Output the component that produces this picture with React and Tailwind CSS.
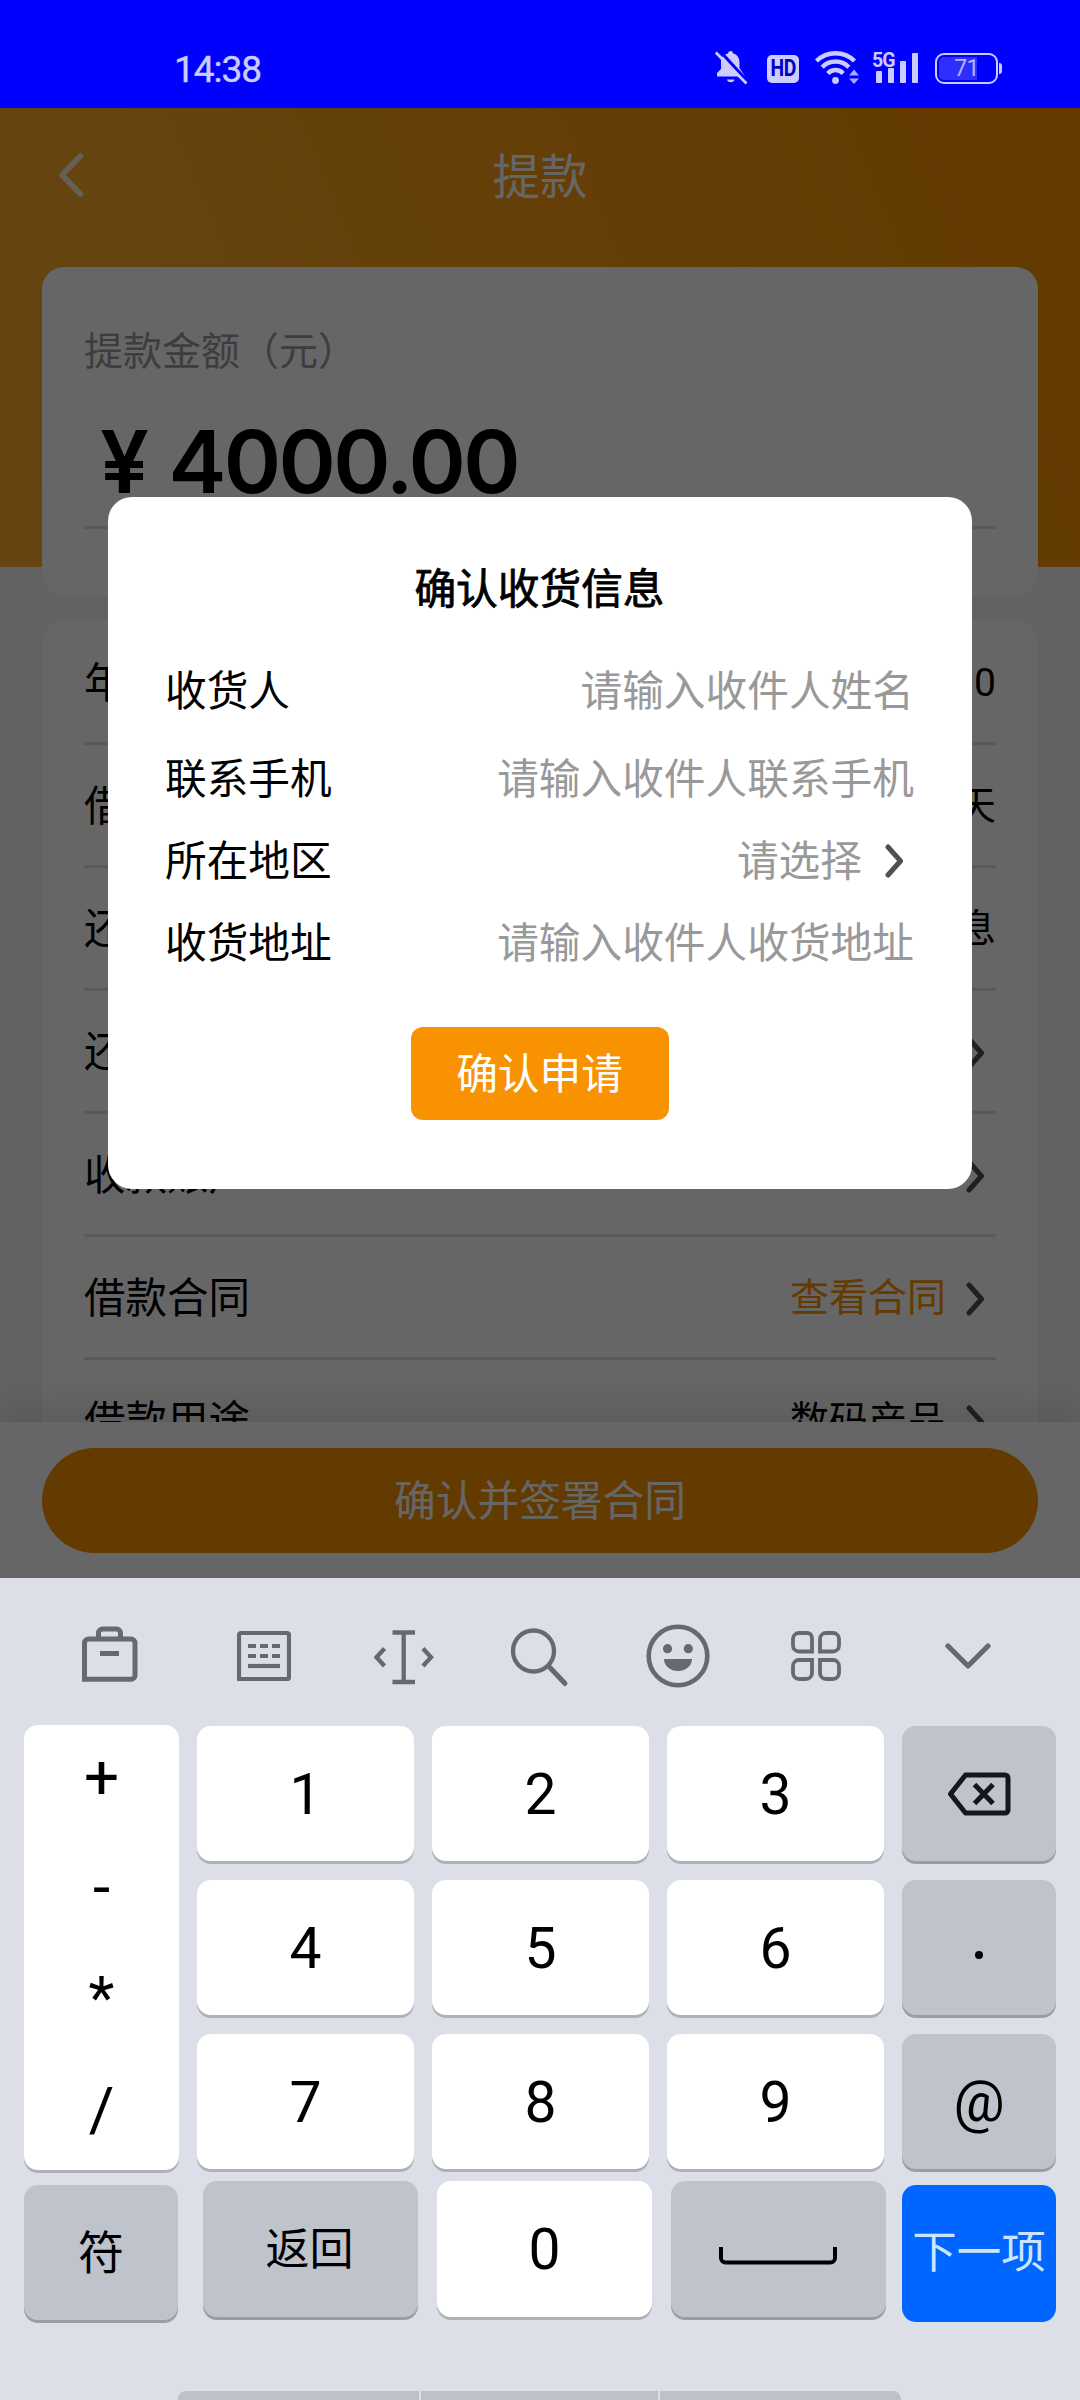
const cjk = "font-['Inter','Noto_Sans_CJK_SC',sans-serif]"

function Chevron({ className = '' }) {
  return (
    <svg className={className} width="20" height="34" viewBox="0 0 20 34" fill="none" stroke="#505050" strokeWidth="5" strokeLinecap="round" strokeLinejoin="round">
      <path d="M3 3 L15.500 17 L3 31" />
    </svg>
  )
}

function StatusBar() {
  return (
    <div className="flex h-[108px] shrink-0 items-start bg-[#0000ff] pt-[49px] text-[#ccccff]">
      <span className="ml-[174px] w-[90px] font-['Roboto',sans-serif] text-[37px] leading-[42px] tracking-[-1px] [-webkit-text-stroke:0.4px_#ccccff]">
        14:38
      </span>

      {/* Muted bell */}
      <svg className="ml-[450px]" width="34" height="36" viewBox="0 0 34 36" fill="currentColor">
        <path d="M16.5 2 a2.6 2.6 0 0 1 2.6 2.4 C24 5.6 25.5 9.5 25.5 14 V19 L31 27.5 H3 V24 L7 20 V12 C7.2 8 9.5 5.5 14 4.4 A2.6 2.6 0 0 1 16.5 2 Z" />
        <path d="M13 30.5 h7.5 a3.8 3.2 0 0 1 -7.5 0 Z" />
        <path d="M5 1 L36 35" stroke="#0000ff" strokeWidth="3" />
        <path d="M1.8 3.5 L32.5 34.5" stroke="currentColor" strokeWidth="2.8" fill="none" />
      </svg>

      <div className="mt-[6px] ml-[19px] flex h-[28px] w-[32px] items-center justify-center rounded-[5px] bg-[#ccccff] font-['Roboto',sans-serif] text-[23px] font-bold tracking-[-0.3px] text-[#0000c8]">
        <span className="scale-x-[0.84]">HD</span>
      </div>

      {/* Wi-Fi with traffic arrows */}
      <svg className="ml-[16px]" width="46" height="36" viewBox="0 0 46 36" fill="none" stroke="currentColor" strokeWidth="4.4">
        <path d="M1.5 12 A27 27 0 0 1 39.5 12" />
        <path d="M7.2 18.2 A18.5 18.5 0 0 1 33.8 18.2" />
        <path d="M12.8 24.4 A10.5 10.5 0 0 1 28.2 24.4" />
        <circle cx="20.5" cy="31.5" r="3.4" fill="currentColor" stroke="none" />
        <path d="M39 20.5 l5 6 h-10 Z M39 35 l5 -5.500 h-10 Z" fill="#a6a6ff" stroke="none" />
      </svg>

      {/* Mobile signal */}
      <div className="relative ml-[12px] h-[36px] w-[48px]">
        <span className="absolute top-[1px] left-[-1px] font-['Roboto',sans-serif] text-[21px] leading-[20px] font-bold tracking-[-1px]">
          <span className="inline-block origin-left scale-x-[0.93]">5G</span>
        </span>
        <div className="flex h-[34px] items-end gap-[6px] pl-[3px]">
          <i className="h-[12px] w-[6px] rounded-[1px] bg-[#ccccff]" />
          <i className="h-[15px] w-[6px] rounded-[1px] bg-[#ccccff]" />
          <i className="h-[22px] w-[6px] rounded-[1px] bg-[#ccccff]" />
          <i className="h-[30px] w-[6px] rounded-[1px] bg-[#ccccff]" />
        </div>
      </div>

      <div className="mt-[4px] ml-[14px] flex h-[31px] w-[63px] rounded-[9px] border-[2.5px] border-[#ccccff] p-[2px]">
        <div className="flex w-[38px] items-center justify-end rounded-l-[5px] bg-[#2e2eff]">
          <span className="-mr-[2px] font-['Roboto',sans-serif] text-[23px] leading-none tracking-[-0.5px] text-[#b4b4ff]">71</span>
        </div>
      </div>
      <i className="mt-[14px] ml-[1px] h-[11px] w-[3px] rounded-r bg-[#ccccff]" />
    </div>
  )
}

const rows = [
  { label: '年利率', value: '0' },
  { label: '借款期限', value: '天' },
  { label: '还款方式', value: '息' },
  { label: '还款计划', arrow: true },
  { label: '收款账户', arrow: true },
  { label: '借款合同', value: '查看合同', arrow: true, accent: true },
  { label: '借款用途', value: '数码产品', arrow: true },
]

function LoanPage() {
  return (
    <>
      <div className="h-[1314px] overflow-hidden bg-[#f5f5f5]">
        <div className="h-[459px] bg-[linear-gradient(68deg,#ffac2d_0%,#fda926_28%,#f99e14_48%,#f99a0c_70%,#f89200_100%)]">
          <header className="flex h-[135px] items-center px-[57px] text-white">
            <svg className="-mt-[2px]" width="28" height="48" viewBox="0 0 28 48" fill="none" stroke="#fff" strokeOpacity="0.8" strokeWidth="5.500" strokeLinecap="round" strokeLinejoin="round">
              <path d="M23.500 5 L5 24 L23.500 43" />
            </svg>
            <h1 className="flex-1 pt-[2px] pr-[28px] text-center text-[47.500px]">提款</h1>
          </header>

          <section className="mx-[42px] mt-[24px] h-[328px] rounded-[22px] bg-white px-[42px] pt-[54px]">
            <p className="text-[39px] leading-[60px] text-[#999]">提款金额（元）</p>
            <div className="mt-[24px] flex h-[124px] items-start border-b-[3px] border-[#e0e0e0] pt-[13px] pl-[16px] text-[87px] leading-none font-semibold tracking-[-2.600px]">
              <span className="mr-[22px]">¥</span>
              <span>4000.00</span>
            </div>
          </section>

          <section className="mx-[42px] mt-[26px] h-[900px] rounded-[22px] bg-white px-[42px] pt-px">
            {rows.map((row) => (
              <div key={row.label} className="flex h-[123px] items-center border-b-[3px] border-[#dedede] pt-[3px] text-[41.500px] text-black">
                <span>{row.label}</span>
                <span className={`ml-auto font-['Roboto','Noto_Sans_CJK_SC',sans-serif] text-[39px] ${row.accent ? 'text-[#f89200]' : ''}`}>
                  {row.value}
                </span>
                {row.arrow && <Chevron className="mr-[10px] ml-[20px]" />}
              </div>
            ))}
          </section>
        </div>
      </div>

      <div className="relative h-[156px] bg-white px-[42px] pt-[26px] shadow-[0_-6px_46px_rgba(0,0,0,0.15)]">
        <button className="h-[105px] w-full rounded-full bg-[#f89200] pt-[2px] text-[41.700px] text-white">确认并签署合同</button>
      </div>
    </>
  )
}

function Field({ label, placeholder, arrow, className }) {
  return (
    <div className={`flex items-center justify-between text-[41.700px] ${className}`}>
      <span className="text-black">{label}</span>
      <span className="flex items-center text-[#999]">
        {placeholder}
        {arrow && <Chevron className="mr-[9px] ml-[23px]" />}
      </span>
    </div>
  )
}

function ConfirmDialog() {
  return (
    <div className="h-[692px] w-[864px] rounded-[24px] bg-white pt-[60px] pr-[58px] pl-[57px]">
      <h2 className="text-center text-[41.700px] leading-[64px] text-black [-webkit-text-stroke:0.8px_#000]">确认收货信息</h2>
      <Field className="mt-[26px] h-[88px]" label="收货人" placeholder="请输入收件人姓名" />
      <Field className="h-[88px]" label="联系手机" placeholder="请输入收件人联系手机" />
      <Field className="h-[76px]" label="所在地区" placeholder="请选择" arrow />
      <Field className="h-[88px]" label="收货地址" placeholder="请输入收件人收货地址" />
      <button className="mx-auto mt-[40px] block h-[93px] w-[258px] rounded-[12px] bg-[#f89200] pt-px text-[41.700px] text-white">
        确认申请
      </button>
    </div>
  )
}

function KeyboardToolbar() {
  return (
    <div className="flex h-[147px] items-start pt-[46px] pl-[82px] text-[#676871]">
      <svg width="56" height="64" viewBox="0 0 56 64" fill="none" stroke="currentColor" strokeWidth="5">
        <path d="M2.500 55.200 V19 a4 4 0 0 1 4 -4 H49 a4 4 0 0 1 4 4 V51.200 a4 4 0 0 1 -4 4 Z" />
        <path d="M16.500 15 V9 a4 4 0 0 1 4 -4 h14 a4 4 0 0 1 4 4 V15" />
        <path d="M18 29.500 h19" />
      </svg>
      <svg className="ml-[99px]" width="54" height="64" viewBox="0 0 54 64" fill="none" stroke="currentColor" strokeWidth="4.200">
        <path d="M2 55 V11 a2 2 0 0 1 2 -2 H50 a2 2 0 0 1 2 2 V53 a2 2 0 0 1 -2 2 Z" />
        <path d="M11 22 h32 M11 32 h32" strokeDasharray="8 4" />
        <path d="M11 42 h32" />
      </svg>
      <svg className="ml-[83px]" width="60" height="64" viewBox="0 0 60 64" fill="none" stroke="currentColor" strokeWidth="4.300">
        <path d="M18.500 8.500 h22.500 M18.500 58 h22.500 M29.700 8.500 V58" />
        <path d="M10.500 24.500 L2.500 33.300 L10.500 42 M49 24.500 L57 33.300 L49 42" />
      </svg>
      <svg className="ml-[77px]" width="58" height="64" viewBox="0 0 58 64" fill="none" stroke="currentColor" strokeWidth="4.300">
        <circle cx="22.500" cy="27" r="20.500" />
        <path d="M37.500 42 L54 59.500" strokeWidth="5" strokeLinecap="round" />
      </svg>
      <svg className="ml-[77px]" width="64" height="64" viewBox="0 0 64 64" fill="currentColor">
        <circle cx="32" cy="32" r="29.300" fill="none" stroke="currentColor" strokeWidth="4.600" />
        <circle cx="21.500" cy="24.700" r="4.600" />
        <circle cx="42.300" cy="24.700" r="4.600" />
        <path d="M18 35 H46 a14 12 0 0 1 -28 0 Z" />
      </svg>
      <svg className="ml-[81px]" width="50" height="64" viewBox="0 0 50 64" fill="none" stroke="currentColor" strokeWidth="3.800">
        <path d="M8 9 h8 a5 5 0 0 1 5 5 V27.500 H8 a6 6 0 0 1 -6 -6 V15 a6 6 0 0 1 6 -6 Z" />
        <path d="M35 9 h7 a6 6 0 0 1 6 6 V21.500 a6 6 0 0 1 -6 6 H29 V15 a6 6 0 0 1 6 -6 Z" />
        <path d="M8 36 H21 V49 a6 6 0 0 1 -6 6 H8 a6 6 0 0 1 -6 -6 V42 a6 6 0 0 1 6 -6 Z" />
        <path d="M29 36 H42 a6 6 0 0 1 6 6 V49 a6 6 0 0 1 -6 6 H35 a6 6 0 0 1 -6 -6 Z" />
      </svg>
      <svg className="ml-[104px]" width="46" height="64" viewBox="0 0 46 64" fill="none" stroke="currentColor" strokeWidth="5.200" strokeLinecap="round" strokeLinejoin="round">
        <path d="M3 22 L23 42 L43 22" />
      </svg>
    </div>
  )
}

const tones = {
  light: 'bg-white shadow-[0_3px_0_#afb1b9]',
  dark: 'bg-[#bfc3cc] shadow-[0_3px_0_#9a9da7]',
}

function Key({ tone = 'light', className = 'w-[217px]', children }) {
  return (
    <div className={`flex h-[135px] shrink-0 items-center justify-center rounded-[14px] pt-px text-black ${tones[tone]} ${className}`}>
      {children}
    </div>
  )
}

function Keyboard() {
  return (
    <div className="h-[822px] overflow-hidden bg-[#dddfe8] font-['Roboto','Noto_Sans_CJK_SC',sans-serif] text-[57px] leading-none">
      <KeyboardToolbar />

      <div className="flex gap-[18px] pl-[24px]">
        <div className="flex h-[445px] w-[155px] flex-col items-center rounded-[14px] bg-white pt-[21px] text-[62px] leading-none text-black shadow-[0_3px_0_#afb1b9]">
          <span className="h-[110px]">+</span>
          <span className="h-[112px]">-</span>
          <span className="h-[111px] text-[60px]">*</span>
          <span>/</span>
        </div>
        <div className="mt-px grid grid-cols-[217px_217px_217px_154px] gap-[18px]">
          <Key>1</Key>
          <Key>2</Key>
          <Key>3</Key>
          <Key tone="dark" className="w-[154px]">
            <svg width="64" height="44" viewBox="0 0 64 44" fill="none" stroke="#14171c" strokeWidth="5" strokeLinejoin="round">
              <path d="M18.500 3 H58 a3 3 0 0 1 3 3 V38 a3 3 0 0 1 -3 3 H18.500 L3.500 22 Z" />
              <path d="M27.500 12.500 L46 31.500 M46 12.500 L27.500 31.500" />
            </svg>
          </Key>
          <Key>4</Key>
          <Key>5</Key>
          <Key>6</Key>
          <Key tone="dark" className="w-[154px]">
            <i className="mt-[13px] h-[8px] w-[8px] rounded-full bg-black" />
          </Key>
          <Key>7</Key>
          <Key>8</Key>
          <Key>9</Key>
          <Key tone="dark" className="w-[154px] pb-[2px]">@</Key>
        </div>
      </div>

      <div className="mt-[11px] flex items-start pl-[24px]">
        <Key tone="dark" className="mt-[4px] w-[154px] text-[46px]">符</Key>
        <Key tone="dark" className="ml-[25px] h-[136px] w-[215px] pt-[3px] pr-[2px] text-[44px]">返回</Key>
        <Key className="ml-[19px] h-[136px] w-[215px] pt-[3px]">0</Key>
        <Key tone="dark" className="ml-[19px] h-[136px] w-[215px] pr-[2px]">
          <svg className="mt-[12px]" width="118" height="18" viewBox="0 0 118 18" fill="none" stroke="#000" strokeWidth="4">
            <path d="M2 0 V11 a4.500 4.500 0 0 0 4.500 4.500 H111.500 a4.500 4.500 0 0 0 4.500 -4.500 V0" />
          </svg>
        </Key>
        <div className="mt-[4px] ml-[16px] flex h-[137px] w-[154px] items-center justify-center rounded-[14px] bg-[#0066ff] text-[44.500px] whitespace-nowrap text-[#cce5ff]">
          下一项
        </div>
      </div>

      {/* Top edge of the gesture bar */}
      <div className="mt-[69px] ml-[178px] flex h-[9px] w-[723px] gap-[2px]">
        <div className="w-[241px] rounded-tl-[8px] bg-[#c0c0ca]" />
        <div className="w-[237px] bg-[#c0c0ca]" />
        <div className="flex-1 rounded-tr-[8px] bg-[#c0c0ca]" />
      </div>
    </div>
  )
}

export default function App() {
  return (
    <div className={`flex h-[2400px] w-[1080px] flex-col overflow-hidden ${cjk}`}>
      <StatusBar />
      <main className="relative h-[1470px] shrink-0 overflow-hidden">
        <LoanPage />
        {/* Dimmed backdrop with the dialog on top */}
        <div className="absolute inset-0 flex items-start justify-center bg-black/60 pt-[389px]">
          <ConfirmDialog />
        </div>
      </main>
      <Keyboard />
    </div>
  )
}
